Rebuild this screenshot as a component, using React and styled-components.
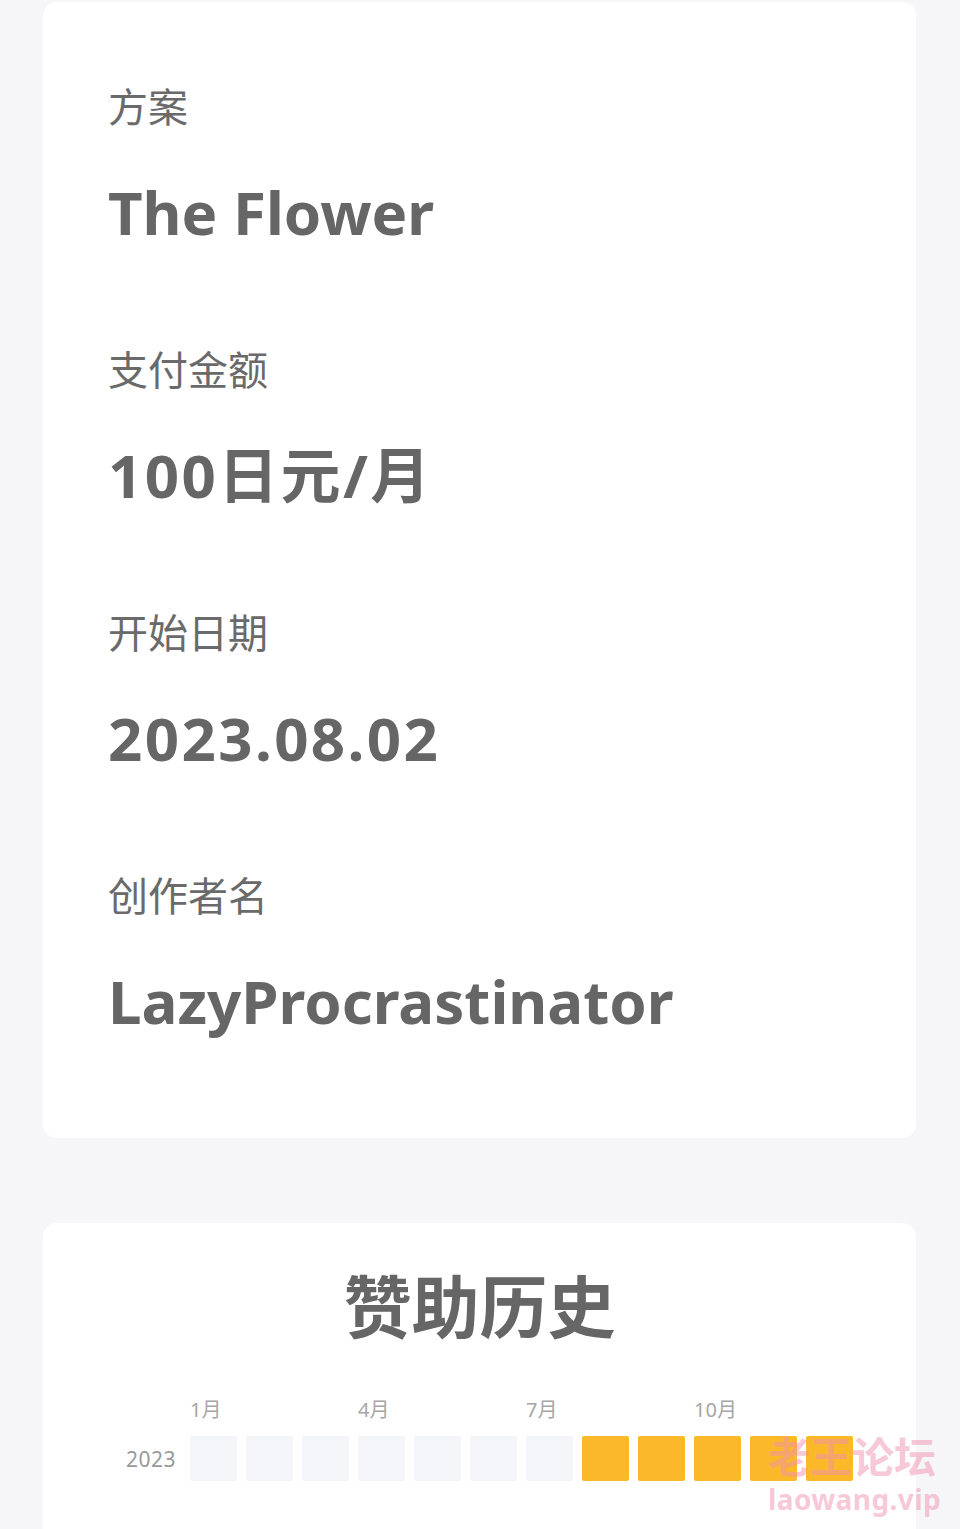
import React from 'react';
import styled, { createGlobalStyle } from 'styled-components';

const GlobalStyle = createGlobalStyle`
  html, body {
    margin: 0;
    padding: 0;
    background: #f6f6f9;
    overflow: hidden;
  }
  body {
    font-family: "Noto Sans", "Noto Sans CJK SC", sans-serif;
    color: #666666;
  }
`;

const Page = styled.div`
  position: relative;
  width: 960px;
  min-height: 1529px;
  box-sizing: border-box;
  padding: 2px 44px 0 43px;
  display: flex;
  flex-direction: column;
  gap: 85px;
`;

const Card = styled.section`
  background: #ffffff;
  border-radius: 14px;
  box-sizing: border-box;
`;

const InfoCard = styled(Card)`
  padding: 85px 65px 107px;
  display: flex;
  flex-direction: column;
  gap: 108px;
`;

const Field = styled.div`
  display: flex;
  flex-direction: column;
  gap: 55px;
`;

const Label = styled.div`
  font-size: 40px;
  line-height: 40px;
  font-weight: 400;
  color: #6a6a6a;
`;

const Value = styled.div`
  font-size: 60px;
  line-height: 60px;
  font-weight: 700;
  color: #666666;
  white-space: nowrap;
  letter-spacing: ${(p) => (p.$numeric ? '2.4px' : '0')};
`;

const HistoryCard = styled(Card)`
  padding: 50px 0 120px;
  display: flex;
  flex-direction: column;
  align-items: center;
`;

const Title = styled.h2`
  margin: 0 0 59px;
  font-size: 68px;
  line-height: 68px;
  font-weight: 700;
  color: #666666;
`;

const Calendar = styled.div`
  display: grid;
  grid-template-columns: 75px repeat(12, 47px);
  column-gap: 9px;
  row-gap: 16px;
  align-items: center;
`;

const MonthLabel = styled.div`
  grid-row: 1;
  grid-column: ${(p) => p.$col};
  font-size: 20px;
  line-height: 20px;
  color: #a6a6a6;
  white-space: nowrap;
`;

const YearLabel = styled.div`
  grid-row: 2;
  grid-column: 1;
  justify-self: end;
  padding-right: 5px;
  font-size: 21px;
  line-height: 24px;
  letter-spacing: 0.5px;
  color: #999999;
`;

const Cell = styled.div`
  grid-row: 2;
  height: 45px;
  border-radius: 2px;
  background: ${(p) => (p.$active ? '#fbb829' : '#f4f5f9')};
`;

const Watermark = styled.div`
  position: absolute;
  left: 768px;
  top: 1432px;
  display: flex;
  flex-direction: column;
  align-items: flex-start;
  color: rgba(240, 145, 175, 0.5);
  pointer-events: none;
`;

const WatermarkTitle = styled.div`
  font-size: 42px;
  line-height: 50px;
  font-weight: 700;
`;

const WatermarkUrl = styled.div`
  font-size: 28px;
  line-height: 34px;
  font-weight: 700;
  letter-spacing: 0.4px;
`;

const fields = [
  { label: '方案', value: 'The Flower' },
  { label: '支付金额', value: '100日元/月', numeric: true },
  { label: '开始日期', value: '2023.08.02', numeric: true },
  { label: '创作者名', value: 'LazyProcrastinator' },
];

const months = [1, 4, 7, 10];
const paidFrom = 8;

export default function App() {
  return (
    <>
      <GlobalStyle />
      <Page>
        <InfoCard>
          {fields.map((f) => (
            <Field key={f.label}>
              <Label>{f.label}</Label>
              <Value $numeric={f.numeric}>{f.value}</Value>
            </Field>
          ))}
        </InfoCard>
        <HistoryCard>
          <Title>赞助历史</Title>
          <Calendar>
            {months.map((m) => (
              <MonthLabel key={m} $col={m + 1}>
                {m}月
              </MonthLabel>
            ))}
            <YearLabel>2023</YearLabel>
            {Array.from({ length: 12 }, (_, i) => (
              <Cell key={i} $active={i + 1 >= paidFrom} />
            ))}
          </Calendar>
        </HistoryCard>
        <Watermark>
          <WatermarkTitle>老王论坛</WatermarkTitle>
          <WatermarkUrl>laowang.vip</WatermarkUrl>
        </Watermark>
      </Page>
    </>
  );
}
